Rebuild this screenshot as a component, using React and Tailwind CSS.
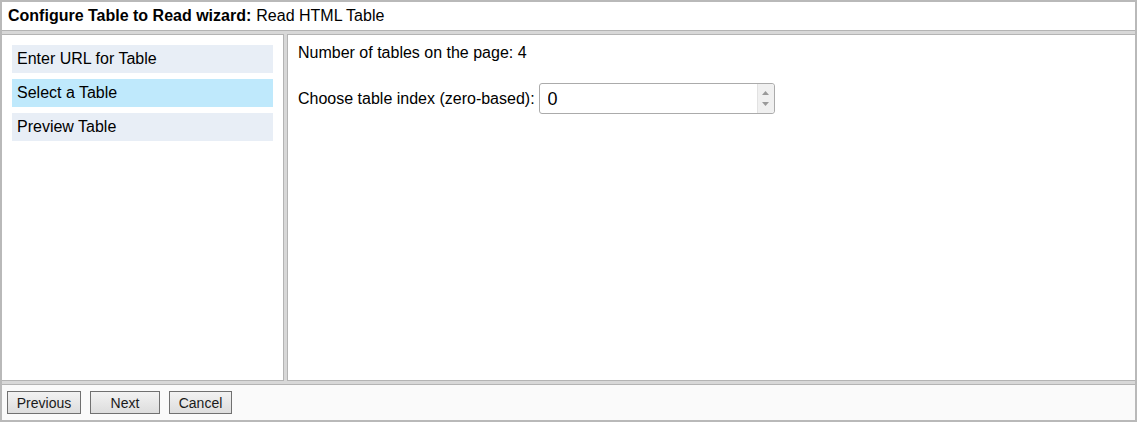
import { useState } from 'react';

const steps = ['Enter URL for Table', 'Select a Table', 'Preview Table'];

function WizardButton({ children, className = '' }) {
  return (
    <button
      type="button"
      className={`h-[23px] border border-[#707070] bg-gradient-to-b from-[#f2f2f2] to-[#dddddd] text-[14px] leading-none text-[#1a1a1a] ${className}`}
    >
      {children}
    </button>
  );
}

export default function App() {
  const [active] = useState(1);
  const [index, setIndex] = useState('0');

  return (
    <div className="h-[422px] w-[1137px] border-2 border-[#b9b9b9] bg-[#d8d8d8] font-['Liberation_Sans',Arial,sans-serif] text-[16px] text-black flex flex-col">
      {/* Title bar */}
      <div className="h-[29px] shrink-0 border-b border-[#b4b4b4] bg-white pl-[6px] flex items-center">
        <span className="font-bold">Configure Table to Read wizard:</span>
        <span className="ml-[5px]">Read HTML Table</span>
      </div>

      {/* Panels */}
      <div className="mt-[3px] flex flex-1 min-h-0 gap-[3px]">
        <div className="w-[282px] shrink-0 border-t border-r border-b border-[#b4b4b4] bg-white px-[10px] pt-[10px] flex flex-col gap-[6px]">
          {steps.map((step, i) => (
            <div
              key={step}
              className={`h-[28px] pl-[5px] flex items-center ${i === active ? 'bg-[#bfe9fc]' : 'bg-[#e8eef6]'}`}
            >
              {step}
            </div>
          ))}
        </div>

        <div className="flex-1 border-t border-l border-b border-[#b4b4b4] bg-white pl-[10px] pt-[8px]">
          <div className="h-[20px] flex items-center">Number of tables on the page: 4</div>
          <div className="mt-[20px] flex items-center">
            <span>Choose table index (zero-based):</span>
            <div className="ml-[4px] h-[31px] w-[236px] rounded-[3px] border border-[#ababab] bg-white flex">
              <input
                value={index}
                onChange={(e) => setIndex(e.target.value)}
                className="min-w-0 flex-1 bg-transparent pl-[8px] pt-[2px] text-[18px] font-['Liberation_Sans',Arial,sans-serif] outline-none"
              />
              <div className="w-[17px] border-l border-[#e2e2e2] bg-[#f0f0f0] flex flex-col items-center justify-center gap-[7px] rounded-r-[3px]">
                <svg width="7" height="4" viewBox="0 0 7 4"><path d="M0 4 L3.5 0 L7 4 Z" fill="#9a9a9a" /></svg>
                <svg width="7" height="4" viewBox="0 0 7 4"><path d="M0 0 L7 0 L3.5 4 Z" fill="#9a9a9a" /></svg>
              </div>
            </div>
          </div>
        </div>
      </div>

      {/* Footer buttons */}
      <div className="mt-[3px] h-[36px] shrink-0 border-t border-[#b4b4b4] bg-[#fafafa] pl-[5px] flex items-center gap-[9px]">
        <WizardButton className="w-[74px]">Previous</WizardButton>
        <WizardButton className="w-[70px]">Next</WizardButton>
        <WizardButton className="w-[63px]">Cancel</WizardButton>
      </div>
    </div>
  );
}
